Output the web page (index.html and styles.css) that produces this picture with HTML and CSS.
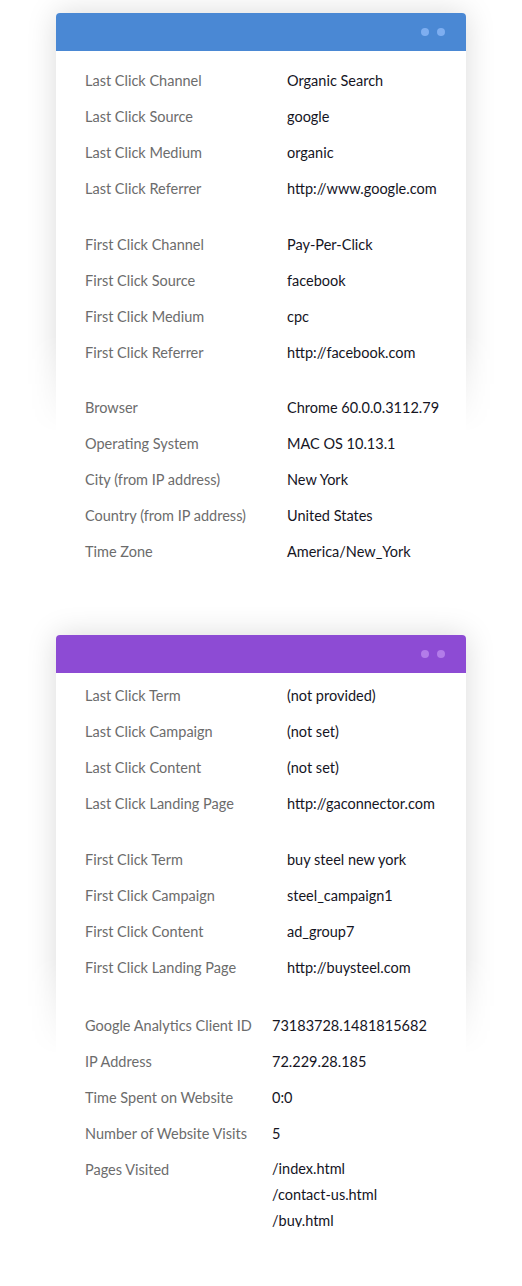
FILE: index.html
```html
<!DOCTYPE html>
<html>
<head>
<meta charset="utf-8">
<link rel="stylesheet" href="styles.css">
</head>
<body>
<div class="page">
  <section class="card card--blue">
    <div class="card__shadow"></div>
    <div class="card__head"><span class="dot"></span><span class="dot"></span></div>
    <div class="card__body">
      <div class="group">
        <div class="label">Last Click Channel</div><div class="value">Organic Search</div>
        <div class="label">Last Click Source</div><div class="value">google</div>
        <div class="label">Last Click Medium</div><div class="value">organic</div>
        <div class="label">Last Click Referrer</div><div class="value">http://www.google.com</div>
      </div>
      <div class="group">
        <div class="label">First Click Channel</div><div class="value">Pay-Per-Click</div>
        <div class="label">First Click Source</div><div class="value">facebook</div>
        <div class="label">First Click Medium</div><div class="value">cpc</div>
        <div class="label">First Click Referrer</div><div class="value">http://facebook.com</div>
      </div>
      <div class="group group--tight">
        <div class="label">Browser</div><div class="value">Chrome 60.0.0.3112.79</div>
        <div class="label">Operating System</div><div class="value">MAC OS 10.13.1</div>
        <div class="label">City (from IP address)</div><div class="value">New York</div>
        <div class="label">Country (from IP address)</div><div class="value">United States</div>
        <div class="label">Time Zone</div><div class="value">America/New_York</div>
      </div>
    </div>
  </section>

  <section class="card card--purple">
    <div class="card__shadow"></div>
    <div class="card__head"><span class="dot"></span><span class="dot"></span></div>
    <div class="card__body">
      <div class="group">
        <div class="label">Last Click Term</div><div class="value">(not provided)</div>
        <div class="label">Last Click Campaign</div><div class="value">(not set)</div>
        <div class="label">Last Click Content</div><div class="value">(not set)</div>
        <div class="label">Last Click Landing Page</div><div class="value">http://gaconnector.com</div>
      </div>
      <div class="group">
        <div class="label">First Click Term</div><div class="value">buy steel new york</div>
        <div class="label">First Click Campaign</div><div class="value">steel_campaign1</div>
        <div class="label">First Click Content</div><div class="value">ad_group7</div>
        <div class="label">First Click Landing Page</div><div class="value">http://buysteel.com</div>
      </div>
      <div class="group group--narrow">
        <div class="label">Google Analytics Client ID</div><div class="value">73183728.1481815682</div>
        <div class="label">IP Address</div><div class="value">72.229.28.185</div>
        <div class="label">Time Spent on Website</div><div class="value">0:0</div>
        <div class="label">Number of Website Visits</div><div class="value">5</div>
        <div class="label">Pages Visited</div>
        <div class="value value--list"><span>/index.html</span><span>/contact-us.html</span><span>/buy.html</span></div>
      </div>
    </div>
  </section>
</div>
</body>
</html>
```

FILE: styles.css
```css
html, body {
  margin: 0;
  padding: 0;
  background: #ffffff;
}

body {
  font-family: Lato, "Open Sans", sans-serif;
  font-size: 14.5px;
}

.page {
  display: flex;
  flex-direction: column;
  align-items: center;
  padding-top: 13px;
  gap: 49px;
}

.card {
  position: relative;
  z-index: 0;
  width: 410px;
  background: #ffffff;
  border-radius: 4px 4px 0 0;
}

/* soft shadow that fades out part way down the card */
.card__shadow {
  position: absolute;
  left: -40px;
  right: -40px;
  top: -40px;
  height: 520px;
  z-index: -1;
  pointer-events: none;
  -webkit-mask-image: linear-gradient(to bottom, #000 0, #000 362px, transparent 460px);
  mask-image: linear-gradient(to bottom, #000 0, #000 362px, transparent 460px);
}

.card__shadow::before {
  content: "";
  position: absolute;
  left: 40px;
  right: 40px;
  top: 40px;
  bottom: 0;
  border-radius: 4px;
  box-shadow: 0 0 30px rgba(0, 0, 0, 0.15);
}

.card__head {
  height: 38px;
  border-radius: 4px 4px 0 0;
  display: flex;
  align-items: center;
  justify-content: flex-end;
  gap: 8px;
  padding-right: 21px;
  padding-bottom: 1px;
  box-sizing: border-box;
}

.dot {
  width: 8px;
  height: 8px;
  border-radius: 50%;
}

.card--blue .card__head { background: #4a88d4; }
.card--blue .dot { background: #7eaef0; }
.card--purple .card__head { background: #8d4bd4; }
.card--purple .dot { background: #b37ce9; }

.card__body {
  background: #ffffff;
  padding: 11px 20px 17px 29px;
  display: flex;
  flex-direction: column;
  gap: 20px;
}

.card--blue .group--tight {
  margin-top: -1px;
}

.card--purple .card__body {
  padding-top: 4px;
  padding-bottom: 40px;
}

.card--purple .group + .group + .group {
  margin-top: 2px;
}

.group {
  display: grid;
  grid-template-columns: 202px 1fr;
  grid-auto-rows: 36px;
  align-items: center;
}

.group--narrow {
  grid-template-columns: 187px 1fr;
}

.label {
  color: #6c6c6c;
  white-space: nowrap;
}

.value {
  color: #15151f;
  white-space: nowrap;
}

.value--list {
  display: flex;
  flex-direction: column;
  align-self: start;
  padding-top: 5px;
  line-height: 26px;
}
```
